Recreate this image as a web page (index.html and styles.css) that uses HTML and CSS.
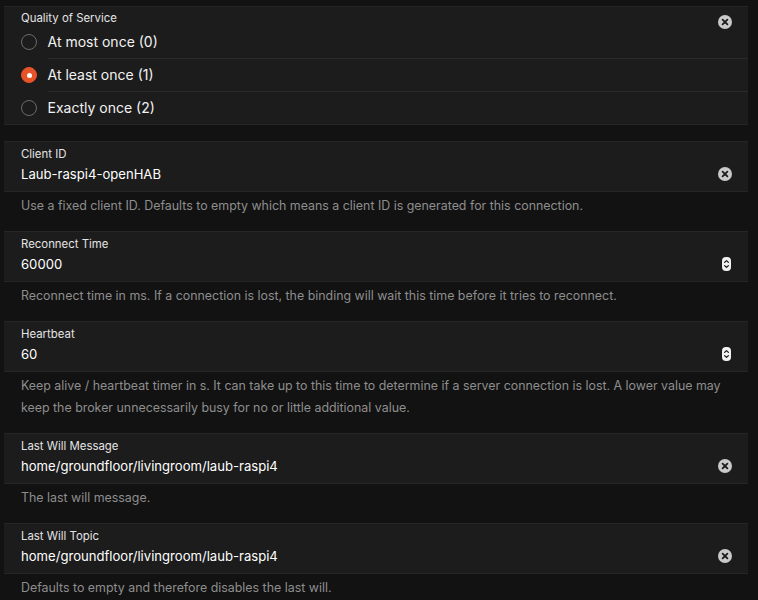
FILE: index.html
```html
<!DOCTYPE html>
<html>
<head>
<meta charset="utf-8">
<link rel="stylesheet" href="styles.css">
</head>
<body>
<div class="page">
  <div class="card qos">
    <div class="qos-head">
      <div class="label">Quality of Service</div>
      <span class="clear clear-top"><svg width="14" height="14" viewBox="0 0 14 14"><circle cx="7" cy="7" r="7" fill="#c9c9c9"/><path d="M4.6 4.6 9.4 9.4M9.4 4.6 4.6 9.4" stroke="#1c1c1c" stroke-width="1.8" stroke-linecap="round"/></svg></span>
    </div>
    <div class="radio-row"><span class="radio"></span><span class="radio-text">At most once (0)</span></div>
    <div class="radio-row"><span class="radio checked"></span><span class="radio-text">At least once (1)</span></div>
    <div class="radio-row last"><span class="radio"></span><span class="radio-text">Exactly once (2)</span></div>
  </div>

  <div class="card field">
    <div class="field-main">
      <div class="label">Client ID</div>
      <div class="value">Laub-raspi4-openHAB</div>
    </div>
    <span class="clear"><svg width="14" height="14" viewBox="0 0 14 14"><circle cx="7" cy="7" r="7" fill="#c9c9c9"/><path d="M4.6 4.6 9.4 9.4M9.4 4.6 4.6 9.4" stroke="#1c1c1c" stroke-width="1.8" stroke-linecap="round"/></svg></span>
  </div>
  <div class="desc">Use a fixed client ID. Defaults to empty which means a client ID is generated for this connection.</div>

  <div class="card field">
    <div class="field-main">
      <div class="label">Reconnect Time</div>
      <div class="value">60000</div>
    </div>
    <span class="spin"><svg width="9" height="14" viewBox="0 0 9 14"><rect x="0" y="0" width="9" height="14" rx="4" fill="#f2f2f2"/><path d="M2.6 5.4 4.5 3.6 6.4 5.4M2.6 8.6 4.5 10.4 6.4 8.6" stroke="#1c1c1c" stroke-width="1.3" fill="none" stroke-linecap="round" stroke-linejoin="round"/></svg></span>
  </div>
  <div class="desc">Reconnect time in ms. If a connection is lost, the binding will wait this time before it tries to reconnect.</div>

  <div class="card field">
    <div class="field-main">
      <div class="label">Heartbeat</div>
      <div class="value">60</div>
    </div>
    <span class="spin"><svg width="9" height="14" viewBox="0 0 9 14"><rect x="0" y="0" width="9" height="14" rx="4" fill="#f2f2f2"/><path d="M2.6 5.4 4.5 3.6 6.4 5.4M2.6 8.6 4.5 10.4 6.4 8.6" stroke="#1c1c1c" stroke-width="1.3" fill="none" stroke-linecap="round" stroke-linejoin="round"/></svg></span>
  </div>
  <div class="desc">Keep alive / heartbeat timer in s. It can take up to this time to determine if a server connection is lost. A lower value may keep the broker unnecessarily busy for no or little additional value.</div>

  <div class="card field">
    <div class="field-main">
      <div class="label">Last Will Message</div>
      <div class="value">home/groundfloor/livingroom/laub-raspi4</div>
    </div>
    <span class="clear"><svg width="14" height="14" viewBox="0 0 14 14"><circle cx="7" cy="7" r="7" fill="#c9c9c9"/><path d="M4.6 4.6 9.4 9.4M9.4 4.6 4.6 9.4" stroke="#1c1c1c" stroke-width="1.8" stroke-linecap="round"/></svg></span>
  </div>
  <div class="desc">The last will message.</div>

  <div class="card field">
    <div class="field-main">
      <div class="label">Last Will Topic</div>
      <div class="value">home/groundfloor/livingroom/laub-raspi4</div>
    </div>
    <span class="clear"><svg width="14" height="14" viewBox="0 0 14 14"><circle cx="7" cy="7" r="7" fill="#c9c9c9"/><path d="M4.6 4.6 9.4 9.4M9.4 4.6 4.6 9.4" stroke="#1c1c1c" stroke-width="1.8" stroke-linecap="round"/></svg></span>
  </div>
  <div class="desc">Defaults to empty and therefore disables the last will.</div>
</div>
</body>
</html>
```

FILE: styles.css
```css
html, body {
  margin: 0;
  padding: 0;
  background: #121212;
}
body {
  font-family: Inter, "Noto Sans", sans-serif;
  color: #ffffff;
  -webkit-font-smoothing: antialiased;
}
.page {
  width: 744px;
  padding: 6px 0 0 4px;
}
.card {
  background: #1c1c1c;
  border-top: 1px solid #262626;
  border-bottom: 1px solid #262626;
}
.label {
  font-size: 11.4px;
  line-height: 16px;
  color: #e4e4e4;
}
.qos-head {
  display: flex;
  justify-content: space-between;
  height: 16px;
  padding: 3px 16px 0 17px;
}
.clear {
  display: flex;
  width: 14px;
  height: 14px;
}
.clear-top {
  margin-top: 5px;
}
.radio-row {
  display: flex;
  align-items: center;
  height: 33px;
  padding-left: 17px;
}
.radio-text {
  flex: 1;
  height: 32px;
  line-height: 32px;
  margin-left: 10.5px;
  font-size: 14px;
  color: #f2f2f2;
  border-bottom: 1px solid #2a2a2a;
}
.radio-row.last {
  height: 32px;
}
.radio-row.last .radio-text {
  border-bottom: none;
}
.radio {
  width: 14px;
  height: 14px;
  border: 1.5px solid #6b6b6b;
  border-radius: 50%;
  box-sizing: content-box;
  flex: none;
  margin-top: -1px;
  position: relative;
}
.radio.checked {
  border-color: #e8532a;
  background: #e8532a;
}
.radio.checked::after {
  content: "";
  position: absolute;
  left: 4.5px;
  top: 4.5px;
  width: 5px;
  height: 5px;
  border-radius: 50%;
  background: #fff;
}
.card.qos + .card {
  margin-top: 16px;
}
.field {
  display: flex;
  align-items: flex-end;
  padding: 4px 16px 7px 17px;
}
.field-main {
  flex: 1;
}
.field .label {
  margin-bottom: 2px;
}
.value {
  font-size: 13.1px;
  line-height: 20px;
  color: #ffffff;
}
.field .clear {
  margin-bottom: 3px;
}
.spin {
  display: flex;
  margin-bottom: 3px;
  margin-right: 1px;
}
.desc {
  padding: 3px 17px 14px 17px;
  font-size: 12.4px;
  line-height: 22px;
  color: #8e8e8e;
}
.desc + .card {
  margin-top: 0;
}
```
